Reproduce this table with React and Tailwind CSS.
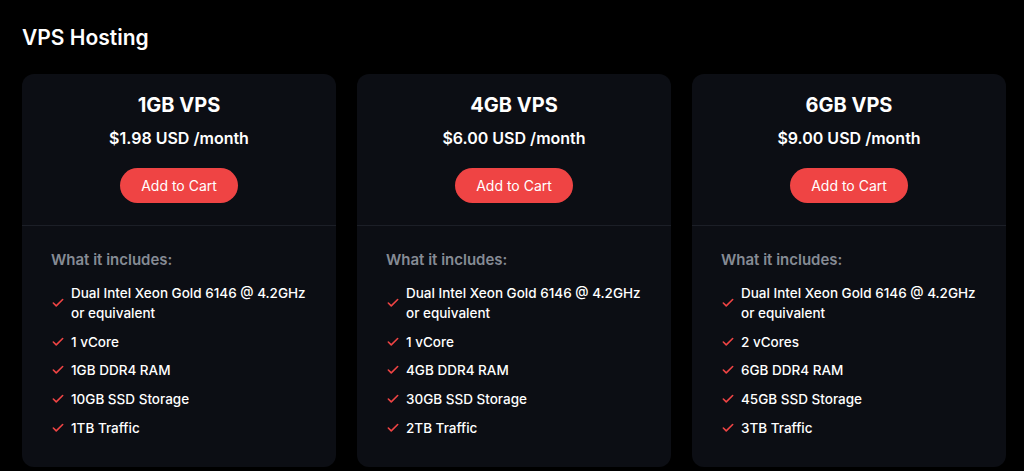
import { Check } from "lucide-react";

const plans = [
  {
    name: "1GB VPS",
    price: "$1.98 USD /month",
    features: ["Dual Intel Xeon Gold 6146 @ 4.2GHz or equivalent", "1 vCore", "1GB DDR4 RAM", "10GB SSD Storage", "1TB Traffic"]
  },
  {
    name: "4GB VPS",
    price: "$6.00 USD /month",
    features: ["Dual Intel Xeon Gold 6146 @ 4.2GHz or equivalent", "1 vCore", "4GB DDR4 RAM", "30GB SSD Storage", "2TB Traffic"]
  },
  {
    name: "6GB VPS",
    price: "$9.00 USD /month",
    features: ["Dual Intel Xeon Gold 6146 @ 4.2GHz or equivalent", "2 vCores", "6GB DDR4 RAM", "45GB SSD Storage", "3TB Traffic"]
  }
];

export default function App() {
  return (
    <div className="min-h-[471px] bg-black text-white font-['Inter',sans-serif] pl-[22px] pt-[24px]">
      <h1 className="text-[21px] font-semibold leading-[28px]">VPS Hosting</h1>

      {/* PLANS */}
      <div className="mt-[22px] grid grid-cols-3 gap-[21px] w-[984px]">
        {plans.map((p) => (
          <div key={p.name} className="bg-[#0c0e14] rounded-[12px] h-[393px]">
            <div className="flex flex-col items-center pt-[17px] border-b border-[#1c1f27] h-[152px]">
              <h2 className="text-[20px] font-bold leading-[28px]">{p.name}</h2>
              <p className="text-[16px] font-semibold leading-[24px] mt-[7px]">{p.price}</p>
              <button className="mt-[18px] bg-[#ef4444] text-white text-[14px] w-[118px] h-[35px] rounded-full">
                Add to Cart
              </button>
            </div>

            <div className="px-[29px] pt-[22px]">
              <p className="text-[15px] font-semibold text-[#868b94] leading-[24px]">What it includes:</p>
              <ul className="mt-[11px] flex flex-col gap-[8.67px]">
                {p.features.map((f) => (
                  <li key={f} className="flex items-center gap-[6px] text-[13.5px] font-medium leading-[20px]">
                    <Check className="w-[14px] h-[14px] shrink-0 text-[#ef4444]" strokeWidth={2.75} />
                    <span className="w-[250px] shrink-0">{f}</span>
                  </li>
                ))}
              </ul>
            </div>
          </div>
        ))}
      </div>
    </div>
  );
}
